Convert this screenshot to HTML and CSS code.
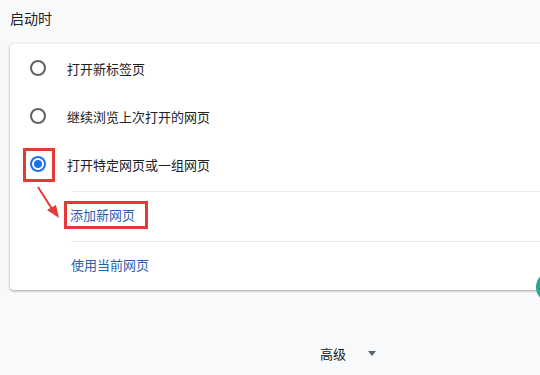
FILE: index.html
```html
<!DOCTYPE html>
<html lang="zh">
<head>
<meta charset="utf-8">
<link rel="stylesheet" href="styles.css">
</head>
<body>
<div class="page">
  <div class="section-title">启动时</div>
  <div class="card">
    <div class="option">
      <span class="radio"></span>
      <span class="label">打开新标签页</span>
    </div>
    <div class="option">
      <span class="radio"></span>
      <span class="label">继续浏览上次打开的网页</span>
    </div>
    <div class="option">
      <span class="radio checked"><span class="mark-box"></span></span>
      <span class="label">打开特定网页或一组网页</span>
    </div>
    <div class="sublist">
      <div class="subitem"><a class="link boxed">添加新网页</a></div>
      <div class="subitem"><a class="link">使用当前网页</a></div>
    </div>
    <svg class="arrow" width="30" height="34" viewBox="0 0 30 34">
      <line x1="3" y1="2" x2="17" y2="24" stroke="#e53935" stroke-width="2"/>
      <polygon points="24,33 12,25 21,20" fill="#e53935"/>
    </svg>
  </div>
  <div class="advanced">
    <span>高级</span>
    <span class="caret"></span>
  </div>
  <div class="fab"></div>
</div>
</body>
</html>
```
FILE: styles.css
```css
html, body {
  margin: 0;
  padding: 0;
}
body {
  background: #f8f9fa;
  font-family: "Noto Sans CJK SC", "Microsoft YaHei", sans-serif;
  color: #202124;
  overflow: hidden;
  width: 540px;
  height: 375px;
}
.page {
  position: relative;
  width: 540px;
  height: 375px;
  overflow: hidden;
}
.section-title {
  font-size: 14px;
  line-height: 20px;
  padding: 8px 0 0 10px;
  height: 36px;
  box-sizing: border-box;
  color: #202124;
}
.card {
  position: relative;
  margin-top: 8px;
  margin-left: 10px;
  width: 560px;
  background: #fff;
  border-radius: 4px;
  box-shadow: 0 1px 2px rgba(60, 64, 67, 0.3), 0 1px 3px 1px rgba(60, 64, 67, 0.12);
  padding-bottom: 0;
}
.option {
  display: flex;
  align-items: center;
  height: 48px;
  padding-left: 20px;
}
.option:first-child {
  margin-top: 1px;
}
.radio {
  position: relative;
  width: 16px;
  height: 16px;
  box-sizing: border-box;
  border: 2px solid #5f6368;
  border-radius: 50%;
  flex: none;
}
.radio.checked {
  border-color: #1a73e8;
}
.radio.checked::after {
  content: "";
  position: absolute;
  left: 2px;
  top: 2px;
  width: 8px;
  height: 8px;
  border-radius: 50%;
  background: #1a73e8;
}
.mark-box {
  position: absolute;
  left: -9px;
  top: -10px;
  width: 32px;
  height: 34px;
  box-sizing: border-box;
  border: 3px solid #e53935;
}
.label {
  margin-left: 21px;
  font-size: 13px;
  color: #202124;
}
.sublist {
  margin-top: 3px;
  margin-left: 61px;
}
.subitem {
  border-top: 1px solid #e8eaed;
  display: flex;
  box-sizing: border-box;
}
.link {
  font-size: 13px;
  color: #2a5db0;
  line-height: 20px;
}
.subitem:first-child {
  height: 50px;
  align-items: flex-start;
  padding-top: 9px;
}
.subitem:last-child {
  height: 49px;
  align-items: center;
  padding-bottom: 3px;
}
.link.boxed {
  margin-left: -7px;
  padding: 1px 3px;
  border: 3px solid #e53935;
  width: 72px;
}
.arrow {
  position: absolute;
  left: 25px;
  top: 141px;
}
.advanced {
  display: flex;
  align-items: center;
  margin-top: 53px;
  margin-left: 320px;
  font-size: 13px;
  color: #202124;
  height: 20px;
}
.caret {
  margin-left: 22px;
  width: 0;
  height: 0;
  border-left: 4px solid transparent;
  border-right: 4px solid transparent;
  border-top: 5px solid #5f6368;
}
.fab {
  position: absolute;
  left: 536px;
  top: 271px;
  width: 32px;
  height: 32px;
  border-radius: 50%;
  background: #26a98e;
}
```
